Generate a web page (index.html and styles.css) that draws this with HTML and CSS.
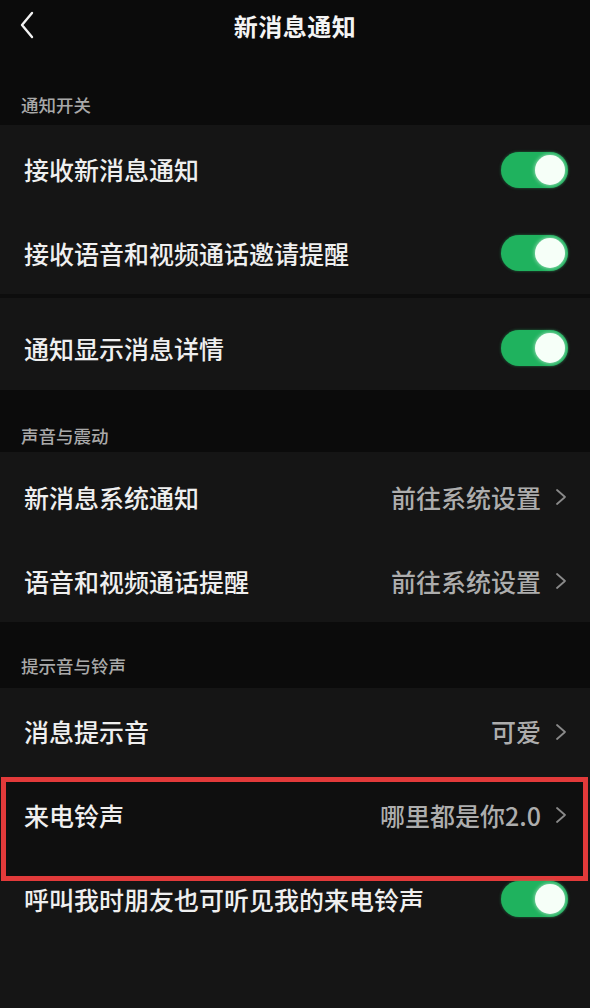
FILE: index.html
```html
<!DOCTYPE html>
<html lang="zh-CN">
<head>
<meta charset="utf-8">
<title>新消息通知</title>
<link rel="stylesheet" href="styles.css">
</head>
<body>
<div class="page">
  <header class="topbar">
    <span class="back">
      <svg width="16" height="28" viewBox="0 0 16 28"><path d="M13 2 L3 14 L13 26" fill="none" stroke="#f2f2f2" stroke-width="2.4" stroke-linecap="round" stroke-linejoin="round"/></svg>
    </span>
    <h1 class="title">新消息通知</h1>
  </header>

  <div class="label label-first">通知开关</div>
  <div class="card">
    <div class="row r1"><span class="text">接收新消息通知</span><span class="switch"><span class="knob"></span></span></div>
    <div class="row r2"><span class="text">接收语音和视频通话邀请提醒</span><span class="switch"><span class="knob"></span></span></div>
  </div>
  <div class="sep"></div>
  <div class="card">
    <div class="row r3"><span class="text">通知显示消息详情</span><span class="switch"><span class="knob"></span></span></div>
  </div>

  <div class="label label-mid">声音与震动</div>
  <div class="card">
    <div class="row r4"><span class="text">新消息系统通知</span><span class="value">前往系统设置<svg class="chev" width="12" height="18" viewBox="0 0 12 18"><path d="M2 2 L10 9 L2 16" fill="none" stroke="#8a8a8a" stroke-width="1.8" stroke-linecap="round" stroke-linejoin="round"/></svg></span></div>
    <div class="row r5"><span class="text">语音和视频通话提醒</span><span class="value">前往系统设置<svg class="chev" width="12" height="18" viewBox="0 0 12 18"><path d="M2 2 L10 9 L2 16" fill="none" stroke="#8a8a8a" stroke-width="1.8" stroke-linecap="round" stroke-linejoin="round"/></svg></span></div>
  </div>

  <div class="label label-last">提示音与铃声</div>
  <div class="card card-tail">
    <div class="row r6"><span class="text">消息提示音</span><span class="value">可爱<svg class="chev" width="12" height="18" viewBox="0 0 12 18"><path d="M2 2 L10 9 L2 16" fill="none" stroke="#8a8a8a" stroke-width="1.8" stroke-linecap="round" stroke-linejoin="round"/></svg></span></div>
    <div class="row r7">
      <span class="highlight"></span>
      <span class="text">来电铃声</span><span class="value">哪里都是你2.0<svg class="chev" width="12" height="18" viewBox="0 0 12 18"><path d="M2 2 L10 9 L2 16" fill="none" stroke="#8a8a8a" stroke-width="1.8" stroke-linecap="round" stroke-linejoin="round"/></svg></span>
    </div>
    <div class="row r8"><span class="text">呼叫我时朋友也可听见我的来电铃声</span><span class="switch"><span class="knob"></span></span></div>
  </div>
</div>
</body>
</html>
```

FILE: styles.css
```css
* { box-sizing: border-box; }
html, body {
  margin: 0;
  padding: 0;
  background: #0b0b0b;
}
body {
  font-family: "Noto Sans CJK SC", "Noto Sans", sans-serif;
  color: #f0f0f0;
}
.page {
  width: 590px;
  height: 1008px;
  overflow: hidden;
  display: flex;
  flex-direction: column;
}
.topbar {
  height: 52px;
  display: flex;
  align-items: center;
  justify-content: center;
  position: relative;
}
.back {
  position: absolute;
  left: 19px;
  top: 11px;
  display: flex;
}
.title {
  margin: 0;
  font-size: 24px;
  font-weight: 700;
  letter-spacing: 0.5px;
  color: #f4f4f4;
  line-height: 1;
}
.label {
  padding-left: 21px;
  font-size: 17.5px;
  font-weight: 500;
  color: #a9a9a9;
  display: flex;
  align-items: flex-end;
  line-height: 1;
}
.label-first { height: 73px; padding-bottom: 12px; }
.label-mid { height: 62px; padding-bottom: 8px; }
.label-last { height: 66px; padding-bottom: 14px; }
.card {
  background: #151515;
}
.card-tail {
  flex: 1;
}
.sep {
  height: 4px;
  background: #0d0d0d;
}
.row {
  display: flex;
  align-items: center;
  justify-content: space-between;
  padding: 0 22px 0 24px;
  position: relative;
}
.text {
  font-size: 25px;
  font-weight: 500;
  line-height: 1;
  color: #efefef;
  position: relative;
  z-index: 1;
}
.value {
  display: flex;
  align-items: center;
  font-size: 25px;
  font-weight: 500;
  line-height: 1;
  color: #adadad;
  position: relative;
  z-index: 1;
}
.chev {
  margin-left: 14px;
  margin-right: 1px;
}
.r1 { height: 87px; padding-top: 2px; }
.r2 { height: 82px; }
.r3 { height: 92px; padding-top: 8px; }
.r4 { height: 88px; padding-top: 2px; }
.r5 { height: 82px; }
.r6 { height: 85px; padding-top: 2px; }
.r7 { height: 84px; }
.r8 { height: 82px; padding-top: 2px; }
.switch {
  width: 67px;
  height: 36px;
  border-radius: 18px;
  background: #1fb25e;
  box-shadow: 0 0 3px rgba(40, 200, 110, 0.5);
  display: flex;
  align-items: center;
  justify-content: flex-end;
  padding-right: 3px;
  position: relative;
  z-index: 1;
}
.knob {
  width: 30px;
  height: 30px;
  border-radius: 50%;
  background: #f6fff8;
  box-shadow: 0 0 4px rgba(255, 255, 255, 0.7);
}
.highlight {
  position: absolute;
  left: 1px;
  right: 2px;
  top: 4px;
  height: 104px;
  border: 5px solid #e23a3a;
  background: #0f0f0f;
  z-index: 0;
}
```
